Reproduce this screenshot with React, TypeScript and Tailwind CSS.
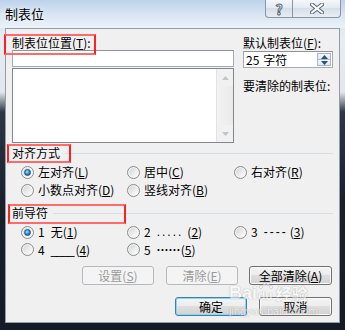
import React from "react";

const M = ({ c }: { c: string }) => (
  <>
    (<span className="underline underline-offset-[1px]">{c}</span>)
  </>
);

function Radio({ checked, label }: { checked?: boolean; label: React.ReactNode }) {
  return (
    <div className="flex items-center gap-[4px]">
      <span className="flex h-[13px] w-[13px] shrink-0 items-center justify-center rounded-full border border-[#8a8c8e] bg-[linear-gradient(135deg,#cfd1d3,#f4f4f4_70%,#ffffff)] shadow-[inset_0_0_0_1px_#f6f6f6]">
        {checked && (
          <span className="h-[7px] w-[7px] rounded-full border border-[#1b4f80] bg-[radial-gradient(circle_at_40%_35%,#a8e2fb,#2a86cc_55%,#0f4c86)]" />
        )}
      </span>
      <span className="flex items-center whitespace-nowrap leading-[14px]">{label}</span>
    </div>
  );
}

// "1 无(1)", "2 .....(2)" and so on
function Leader({ n, children }: { n: string; children: React.ReactNode }) {
  return (
    <>
      <span>{n}</span>
      <span className="ml-[6px] font-['Liberation_Sans',sans-serif]">{children}</span>
      <M c={n} />
    </>
  );
}

function Btn({
  children,
  disabled,
  primary,
  className,
}: {
  children: React.ReactNode;
  disabled?: boolean;
  primary?: boolean;
  className: string;
}) {
  const tone = disabled
    ? "border-[#b5b9bd] bg-[#f4f4f4] text-[#9a9a9a]"
    : primary
      ? "border-[#3c7fb1] bg-[linear-gradient(180deg,#f4f4f4,#ececec_50%,#dedede_50%,#d2d2d2)] shadow-[inset_0_0_0_1px_#8ad6f7]"
      : "border-[#707070] bg-[linear-gradient(180deg,#f4f4f4,#ececec_50%,#dedede_50%,#d2d2d2)] shadow-[inset_0_0_0_1px_#fbfbfb]";
  return (
    <div
      className={`flex h-[19px] items-center justify-center rounded-[3px] border leading-[14px] ${tone} ${className}`}
    >
      {children}
    </div>
  );
}

function Arrow({ up, color }: { up?: boolean; color: string }) {
  return (
    <svg width="7" height="4" viewBox="0 0 7 4">
      <path d={up ? "M0 4 L3.5 0 L7 4 Z" : "M0 0 L3.5 4 L7 0 Z"} fill={color} />
    </svg>
  );
}

function RedBox({ className }: { className: string }) {
  return (
    <div
      className={`pointer-events-none absolute border-x-2 border-y-2 border-x-[#ff2020] border-y-[#ff6a6a] ${className}`}
    />
  );
}

export default function App() {
  return (
    <div className="relative h-[330px] w-[345px] overflow-hidden bg-[linear-gradient(180deg,#cfdff0_0px,#e6ecf3_40px,#e2e7ed_92px,#2b3647_112px,#19212d_200px,#141b26_330px)] font-['Noto_Sans_CJK_SC','Liberation_Sans',sans-serif] text-[12px] text-black">
      {/* title bar */}
      <div className="flex h-[28px] bg-[linear-gradient(180deg,#bcd3ec,#dae6f3_55%,#ecf2f9)]">
        <div className="pl-[5px] pt-[6px] text-[13px] leading-[16px] [text-shadow:0_0_5px_#ffffff]">
          制表位
        </div>
        <div className="ml-auto mr-[4px] flex h-[18px]">
          <div className="flex w-[28px] items-center justify-center rounded-bl-[4px] border border-t-0 border-[#8b95a3] bg-[linear-gradient(180deg,#f4f7fb,#e3e9f1_50%,#d6dee8_50%,#e8edf3)]">
            <span className="text-[14px] font-bold leading-[14px] text-white [-webkit-text-stroke:1px_#5a6675]">
              ?
            </span>
          </div>
          <div className="flex w-[48px] items-center justify-center rounded-br-[4px] border border-l-0 border-t-0 border-[#8b95a3] bg-[linear-gradient(180deg,#f4f7fb,#e3e9f1_50%,#d6dee8_50%,#e8edf3)]">
            <svg width="14" height="11" viewBox="0 0 14 11">
              <path d="M2 1.5 L12 9.5 M12 1.5 L2 9.5" stroke="#5a6675" strokeWidth="4" strokeLinecap="square" />
              <path d="M2 1.5 L12 9.5 M12 1.5 L2 9.5" stroke="#ffffff" strokeWidth="2" strokeLinecap="square" />
            </svg>
          </div>
        </div>
      </div>

      {/* client area */}
      <div className="mx-[5px] h-[295px] border border-[#969da6] bg-[#f0f0f0] px-[6px] pt-[7px]">
        <div className="flex gap-[9px]">
          <div className="w-[222px]">
            <div className="h-[14px] leading-[14px]">
              制表位位置<M c="T" />:
            </div>
            <div className="h-[17px] border border-[#a5acb5] border-t-[#8e949c] bg-white" />
            <div className="mt-[1px] flex h-[75px] border border-[#828790] bg-white">
              <div className="flex-1" />
              <div className="flex w-[17px] flex-col border-l border-[#e3e3e3] bg-[#f1f1f1]">
                <div className="flex h-[17px] items-center justify-center">
                  <Arrow up color="#c4c4c4" />
                </div>
                <div className="flex-1 bg-[linear-gradient(90deg,#f3f3f3,#eaeaea)]" />
                <div className="flex h-[17px] items-center justify-center">
                  <Arrow color="#c4c4c4" />
                </div>
              </div>
            </div>
          </div>
          <div className="w-[90px]">
            <div className="h-[14px] whitespace-nowrap leading-[14px]">
              默认制表位<M c="F" />:
            </div>
            <div className="mt-[1px] flex h-[17px] items-center border border-[#a5acb5] border-t-[#8e949c] bg-white pl-[2px] pr-[1px]">
              <span className="flex-1 leading-[14px]">
                25<span className="ml-[4px]">字符</span>
              </span>
              <div className="flex h-[13px] w-[14px] flex-col border border-[#a9b8c8]">
                <div className="flex flex-1 items-center justify-center bg-[linear-gradient(180deg,#f3f7fb,#dfe8f1)]">
                  <Arrow up color="#2c4e78" />
                </div>
                <div className="flex flex-1 items-center justify-center border-t border-[#a9b8c8] bg-[linear-gradient(180deg,#f3f7fb,#dfe8f1)]">
                  <Arrow color="#2c4e78" />
                </div>
              </div>
            </div>
            <div className="mt-[11px] h-[14px] whitespace-nowrap leading-[14px]">要清除的制表位:</div>
          </div>
        </div>

        {/* alignment */}
        <div className="mt-[3px] flex h-[14px] items-center">
          <span className="leading-[14px]">对齐方式</span>
          <span className="ml-[5px] h-px flex-1 bg-[#d5dfe5]" />
        </div>
        <div className="mt-[3px] grid grid-cols-[106px_107px_1fr] pl-[9px]">
          <div className="flex h-[18px] items-center">
            <Radio checked label={<>左对齐<M c="L" /></>} />
          </div>
          <div className="flex h-[18px] items-center">
            <Radio label={<>居中<M c="C" /></>} />
          </div>
          <div className="flex h-[18px] items-center">
            <Radio label={<>右对齐<M c="R" /></>} />
          </div>
          <div className="flex h-[18px] items-center">
            <Radio label={<>小数点对齐<M c="D" /></>} />
          </div>
          <div className="flex h-[18px] items-center">
            <Radio label={<>竖线对齐<M c="B" /></>} />
          </div>
        </div>

        {/* leader */}
        <div className="mt-[7px] flex h-[14px] items-center">
          <span className="leading-[14px]">前导符</span>
          <span className="ml-[5px] h-px flex-1 bg-[#d5dfe5]" />
        </div>
        <div className="mt-[3px] grid grid-cols-[106px_107px_1fr] grid-rows-[18px_17px] pl-[9px]">
          <div className="flex items-center">
            <Radio checked label={<><span>1</span><span className="ml-[6px]">无</span><M c="1" /></>} />
          </div>
          <div className="flex items-center">
            <Radio label={<Leader n="2"><span className="mr-[4px] tracking-[2px]">.....</span></Leader>} />
          </div>
          <div className="flex items-center">
            <Radio label={<Leader n="3"><span className="mr-[2px] tracking-[2px]">----</span></Leader>} />
          </div>
          <div className="flex items-center">
            <Radio label={<Leader n="4"><span className="mr-[2px] tracking-[-1px]">____</span></Leader>} />
          </div>
          <div className="flex items-center">
            <Radio label={<Leader n="5"><span className="font-bold">······</span></Leader>} />
          </div>
        </div>

        {/* buttons */}
        <div className="mt-[8px] flex justify-end pr-[1px]">
          <Btn disabled className="w-[72px]">
            设置<M c="S" />
          </Btn>
          <Btn disabled className="ml-[12px] w-[72px]">
            清除<M c="E" />
          </Btn>
          <Btn className="ml-[11px] w-[83px]">
            全部清除<M c="A" />
          </Btn>
        </div>
        <div className="mt-[12px] flex justify-end pr-[1px]">
          <Btn primary className="w-[72px]">
            确定
          </Btn>
          <Btn className="ml-[12px] w-[73px]">取消</Btn>
        </div>
      </div>

      {/* annotation boxes */}
      <RedBox className="left-[4px] top-[34px] h-[21px] w-[92px]" />
      <RedBox className="left-[7px] top-[144px] h-[19px] w-[64px]" />
      <RedBox className="left-[8px] top-[204px] h-[20px] w-[118px]" />

      {/* watermark */}
      <div className="pointer-events-none absolute left-[229px] top-[284px] text-white opacity-55 [text-shadow:0_0_1px_#8a8a8a,0_0_1px_#8a8a8a]">
        <div className="flex items-end font-['Liberation_Sans',sans-serif] text-[18px] font-bold leading-[19px]">
          <span>Bai</span>
          <span className="relative ml-[1px] text-[12px] leading-[14px]">
            du
            <svg className="absolute -top-[7px] left-[1px]" width="14" height="7" viewBox="0 0 14 7">
              <circle cx="2" cy="5" r="1.6" fill="#fff" stroke="#9a9a9a" strokeWidth="0.6" />
              <circle cx="5.5" cy="2" r="1.6" fill="#fff" stroke="#9a9a9a" strokeWidth="0.6" />
              <circle cx="9" cy="2" r="1.6" fill="#fff" stroke="#9a9a9a" strokeWidth="0.6" />
              <circle cx="12" cy="5" r="1.6" fill="#fff" stroke="#9a9a9a" strokeWidth="0.6" />
            </svg>
          </span>
          <span className="ml-[3px] font-['Noto_Sans_CJK_SC',sans-serif] text-[16px] leading-[19px]">经验</span>
        </div>
        <div className="mt-[2px] font-['Liberation_Sans',sans-serif] text-[11px] leading-[12px]">jingyan.baidu.com</div>
      </div>
    </div>
  );
}
